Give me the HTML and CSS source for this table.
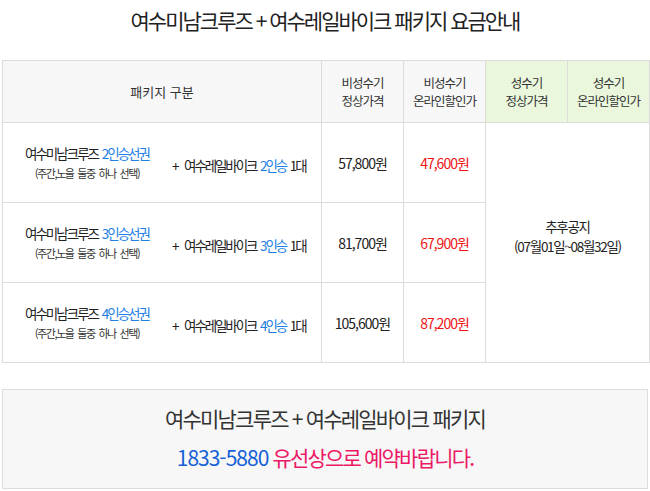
FILE: index.html
```html
<!DOCTYPE html>
<html lang="ko">
<head>
    <meta charset="UTF-8">
    <title>여수미남크루즈 + 여수레일바이크 패키지 요금안내</title>
    <link rel="stylesheet" href="styles.css">
</head>
<body>
<h1 class="title">여수미남크루즈 + 여수레일바이크 패키지 요금안내</h1>

<table class="price">
    <colgroup>
        <col class="c-pkg">
        <col class="c-price">
        <col class="c-price">
        <col class="c-price">
        <col class="c-price">
    </colgroup>
    <thead>
    <tr>
        <th class="head-pkg">패키지 구분</th>
        <th>비성수기<br>정상가격</th>
        <th>비성수기<br>온라인할인가</th>
        <th class="peak">성수기<br>정상가격</th>
        <th class="peak">성수기<br>온라인할인가</th>
    </tr>
    </thead>
    <tbody>
    <tr>
        <td class="pkg">
            <div class="pkg-in">
                <div class="cruise">
                    <p>여수미남크루즈 <em>2인승선권</em></p>
                    <p class="note">(주간,노을 둘중 하나 선택)</p>
                </div>
                <div class="bike"><span class="plus">+</span> 여수레일바이크 <em>2인승</em> 1대</div>
            </div>
        </td>
        <td>57,800원</td>
        <td class="sale">47,600원</td>
        <td class="later" colspan="2" rowspan="3">추후공지<br>(07월01일~08월32일)</td>
    </tr>
    <tr>
        <td class="pkg">
            <div class="pkg-in">
                <div class="cruise">
                    <p>여수미남크루즈 <em>3인승선권</em></p>
                    <p class="note">(주간,노을 둘중 하나 선택)</p>
                </div>
                <div class="bike"><span class="plus">+</span> 여수레일바이크 <em>3인승</em> 1대</div>
            </div>
        </td>
        <td>81,700원</td>
        <td class="sale">67,900원</td>
    </tr>
    <tr>
        <td class="pkg">
            <div class="pkg-in">
                <div class="cruise">
                    <p>여수미남크루즈 <em>4인승선권</em></p>
                    <p class="note">(주간,노을 둘중 하나 선택)</p>
                </div>
                <div class="bike"><span class="plus">+</span> 여수레일바이크 <em>4인승</em> 1대</div>
            </div>
        </td>
        <td>105,600원</td>
        <td class="sale">87,200원</td>
    </tr>
    </tbody>
</table>

<div class="call">
    <p class="call-name">여수미남크루즈 + 여수레일바이크 패키지</p>
    <p class="call-tel"><span class="tel">1833-5880</span> <span class="ask">유선상으로 예약바랍니다.</span></p>
</div>
</body>
</html>
```

FILE: styles.css
```css
*{
    margin:0;
    padding:0;
    box-sizing: border-box;
}
body{
    margin:0;
    width: 650px;
    background: #fff;
    color: #222;
    font-family: "Noto Sans CJK KR", "Noto Sans", sans-serif;
}
em{
    font-style: normal;
    color: #1d80e2;
}
.title{
    height: 60px;
    padding-top: 3px;
    text-align: center;
    font-size: 21px;
    font-weight: normal;
    line-height: 34px;
    letter-spacing: -2px;
    color: #222;
}

/* 요금표 */
.price{
    width: 646px;
    margin-left: 2px;
    border-collapse: collapse;
    border: 1px solid #dcdcdc;
    table-layout: fixed;
    font-size: 13px;
    letter-spacing: -1px;
}
.c-pkg{ width: 319px; }
.c-price{ width: 82px; }
.price th,
.price td{
    border: 1px solid #dcdcdc;
    text-align: center;
    vertical-align: middle;
}
.price th{
    height: 62px;
    background: #f7f7f7;
    font-weight: normal;
    font-size: 12.5px;
    line-height: 17.5px;
    color: #333;
}
.price th.head-pkg{
    font-size: 13px;
    letter-spacing: 0;
}
.price th.peak{
    background: #eaf7dc;
}
.price td{
    height: 80px;
    font-size: 14px;
    color: #222;
}
.price td.sale{
    color: #ee1414;
}
.price td.later{
    font-size: 13.5px;
    letter-spacing: -1.3px;
    line-height: 20px;
    padding-bottom: 14px;
}
.pkg-in{
    display: flex;
    align-items: center;
}
.cruise{
    width: 168px;
    text-align: center;
    line-height: 20px;
    font-size: 13.5px;
    letter-spacing: -2px;
    word-spacing: 2px;
}
.cruise .note{
    font-size: 11px;
    letter-spacing: -1.4px;
    word-spacing: 2px;
    color: #333;
}
.bike{
    padding-left: 1px;
    padding-top: 4px;
    font-size: 13.5px;
    letter-spacing: -2.1px;
    word-spacing: 2px;
}
.bike .plus{
    margin-right: 3px;
}

/* 예약안내 */
.call{
    width: 646px;
    height: 100px;
    margin: 26px 0 0 2px;
    padding-top: 10px;
    background: #f7f7f7;
    border: 1px solid #dcdcdc;
    text-align: center;
    letter-spacing: -1.8px;
}
.call-name{
    font-size: 21px;
    line-height: 36px;
    color: #333;
}
.call-tel{
    font-size: 21px;
    line-height: 42px;
}
.call-tel .tel{
    color: #1560d6;
    letter-spacing: -1px;
}
.call-tel .ask{
    color: #ec1a66;
}
```
